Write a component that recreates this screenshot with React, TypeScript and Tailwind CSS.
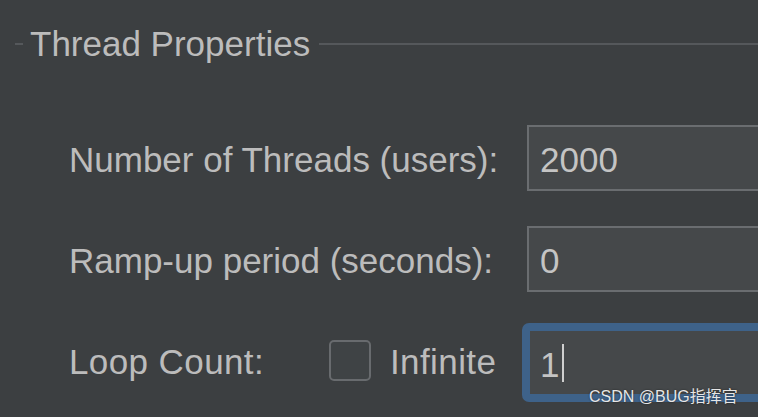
import React from "react";

const font = { fontFamily: '"Liberation Sans", Arial, "Noto Sans CJK SC", sans-serif' };

function Field({ value }: { value: string }) {
  return (
    <div className="h-[66px] w-[260px] shrink-0 border-2 border-[#6a6d70] bg-[#45484a] flex items-center pl-[11px] text-[35px] leading-[35px] text-[#c4c4c4]">
      <span className="pt-[3px]">{value}</span>
    </div>
  );
}

export default function App() {
  return (
    <div
      className="relative w-[758px] h-[417px] overflow-hidden bg-[#3c3f41] text-[#bcbcbc]"
      style={font}
    >
      {/* Title */}
      <div className="flex items-center pt-[26px] h-[61px]">
        <div className="ml-[15px] w-[8px] h-[2px] bg-[#55585b]" />
        <span className="ml-[7px] text-[35px] leading-[35px] whitespace-nowrap">Thread Properties</span>
        <div className="ml-[9px] flex-1 h-[2px] bg-[#55585b]" />
      </div>

      {/* Rows */}
      <div className="mt-[64px] flex flex-col gap-[35px] pl-[69px]">
        <div className="flex items-center h-[66px]">
          <span className="w-[458px] shrink-0 text-[35px] leading-[35px] pt-[3px] whitespace-nowrap">
            Number of Threads (users):
          </span>
          <Field value="2000" />
        </div>
        <div className="flex items-center h-[66px]">
          <span className="w-[458px] shrink-0 text-[35px] leading-[35px] pt-[3px] whitespace-nowrap">
            Ramp-up period (seconds):
          </span>
          <Field value="0" />
        </div>
        <div className="flex items-center h-[66px]">
          <span className="w-[260px] shrink-0 text-[35px] leading-[35px] pt-[3px] whitespace-nowrap tracking-[0.4px]">
            Loop Count:
          </span>
          <div className="w-[42px] h-[41px] shrink-0 rounded-[5px] border-2 border-[#686b6e] bg-[#3f4345]" />
          <span className="ml-[19px] w-[132px] shrink-0 text-[35px] leading-[35px] pt-[3px] whitespace-nowrap tracking-[0.4px]">
            Infinite
          </span>
          <div className="self-start -mt-[4px] h-[79px] w-[270px] shrink-0 rounded-[7px] border-[8px] border-[#3e6289] bg-[#45484a] flex items-center pl-[10px] text-[35px] leading-[35px] text-[#c4c4c4]">
            <span className="pt-[3px]">1</span>
            <div className="ml-[3px] w-[2px] h-[38px] bg-[#cfcfcf]" />
          </div>
        </div>
      </div>

      {/* Watermark */}
      <div
        className="absolute left-[589px] top-[386px] text-[16px] leading-[22px] text-[#e6e6e6] whitespace-nowrap"
        style={{ textShadow: "0 0 2px rgba(0,0,0,0.6)" }}
      >
        CSDN @BUG指挥官
      </div>
    </div>
  );
}
